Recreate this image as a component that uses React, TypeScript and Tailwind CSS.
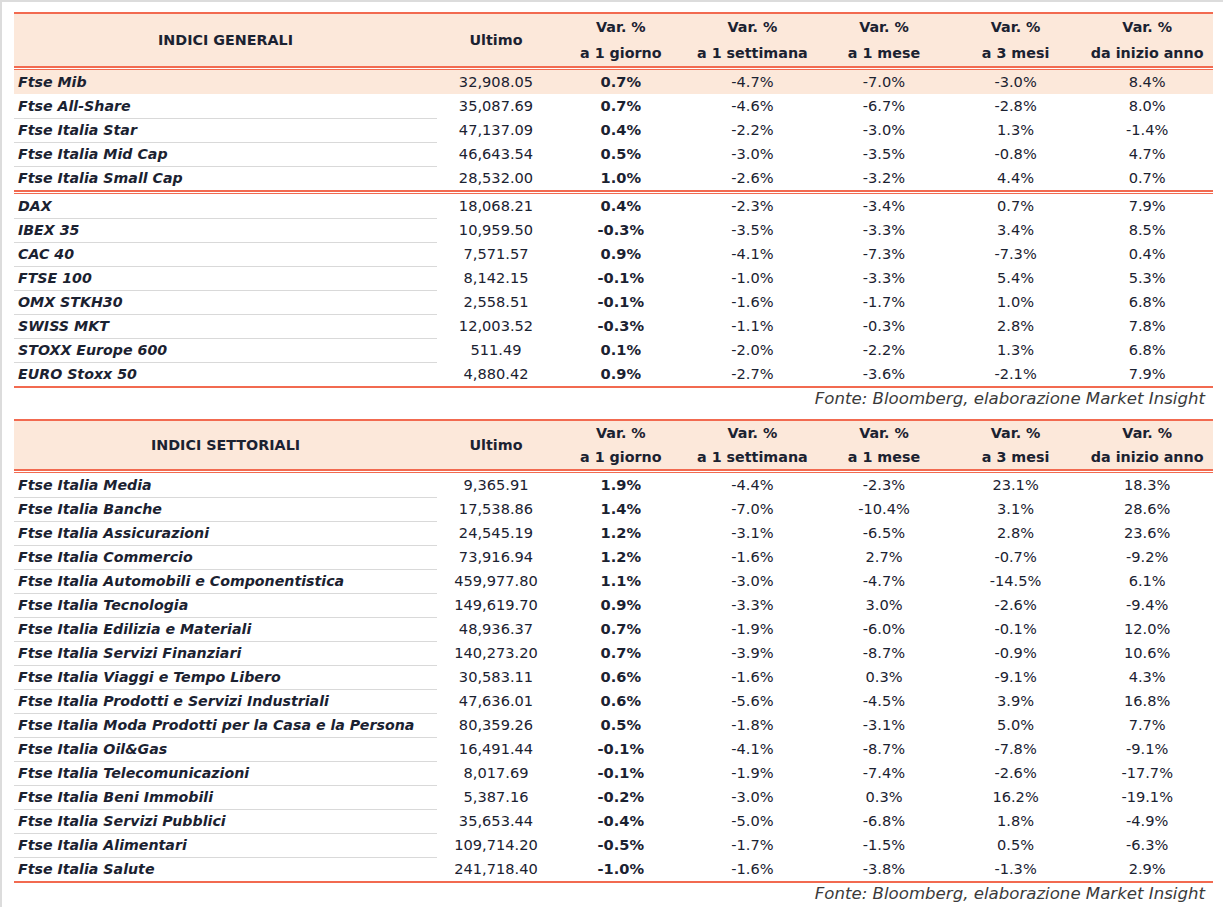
import React from "react";

type Row = [string, string, string, string, string, string, string];

const generaliA: Row[] = [
  ["Ftse Mib", "32,908.05", "0.7%", "-4.7%", "-7.0%", "-3.0%", "8.4%"],
  ["Ftse All-Share", "35,087.69", "0.7%", "-4.6%", "-6.7%", "-2.8%", "8.0%"],
  ["Ftse Italia Star", "47,137.09", "0.4%", "-2.2%", "-3.0%", "1.3%", "-1.4%"],
  ["Ftse Italia Mid Cap", "46,643.54", "0.5%", "-3.0%", "-3.5%", "-0.8%", "4.7%"],
  ["Ftse Italia Small Cap", "28,532.00", "1.0%", "-2.6%", "-3.2%", "4.4%", "0.7%"],
];

const generaliB: Row[] = [
  ["DAX", "18,068.21", "0.4%", "-2.3%", "-3.4%", "0.7%", "7.9%"],
  ["IBEX 35", "10,959.50", "-0.3%", "-3.5%", "-3.3%", "3.4%", "8.5%"],
  ["CAC 40", "7,571.57", "0.9%", "-4.1%", "-7.3%", "-7.3%", "0.4%"],
  ["FTSE 100", "8,142.15", "-0.1%", "-1.0%", "-3.3%", "5.4%", "5.3%"],
  ["OMX STKH30", "2,558.51", "-0.1%", "-1.6%", "-1.7%", "1.0%", "6.8%"],
  ["SWISS MKT", "12,003.52", "-0.3%", "-1.1%", "-0.3%", "2.8%", "7.8%"],
  ["STOXX Europe 600", "511.49", "0.1%", "-2.0%", "-2.2%", "1.3%", "6.8%"],
  ["EURO Stoxx 50", "4,880.42", "0.9%", "-2.7%", "-3.6%", "-2.1%", "7.9%"],
];

const settoriali: Row[] = [
  ["Ftse Italia Media", "9,365.91", "1.9%", "-4.4%", "-2.3%", "23.1%", "18.3%"],
  ["Ftse Italia Banche", "17,538.86", "1.4%", "-7.0%", "-10.4%", "3.1%", "28.6%"],
  ["Ftse Italia Assicurazioni", "24,545.19", "1.2%", "-3.1%", "-6.5%", "2.8%", "23.6%"],
  ["Ftse Italia Commercio", "73,916.94", "1.2%", "-1.6%", "2.7%", "-0.7%", "-9.2%"],
  ["Ftse Italia Automobili e Componentistica", "459,977.80", "1.1%", "-3.0%", "-4.7%", "-14.5%", "6.1%"],
  ["Ftse Italia Tecnologia", "149,619.70", "0.9%", "-3.3%", "3.0%", "-2.6%", "-9.4%"],
  ["Ftse Italia Edilizia e Materiali", "48,936.37", "0.7%", "-1.9%", "-6.0%", "-0.1%", "12.0%"],
  ["Ftse Italia Servizi Finanziari", "140,273.20", "0.7%", "-3.9%", "-8.7%", "-0.9%", "10.6%"],
  ["Ftse Italia Viaggi e Tempo Libero", "30,583.11", "0.6%", "-1.6%", "0.3%", "-9.1%", "4.3%"],
  ["Ftse Italia Prodotti e Servizi Industriali", "47,636.01", "0.6%", "-5.6%", "-4.5%", "3.9%", "16.8%"],
  ["Ftse Italia Moda Prodotti per la Casa e la Persona", "80,359.26", "0.5%", "-1.8%", "-3.1%", "5.0%", "7.7%"],
  ["Ftse Italia Oil&Gas", "16,491.44", "-0.1%", "-4.1%", "-8.7%", "-7.8%", "-9.1%"],
  ["Ftse Italia Telecomunicazioni", "8,017.69", "-0.1%", "-1.9%", "-7.4%", "-2.6%", "-17.7%"],
  ["Ftse Italia Beni Immobili", "5,387.16", "-0.2%", "-3.0%", "0.3%", "16.2%", "-19.1%"],
  ["Ftse Italia Servizi Pubblici", "35,653.44", "-0.4%", "-5.0%", "-6.8%", "1.8%", "-4.9%"],
  ["Ftse Italia Alimentari", "109,714.20", "-0.5%", "-1.7%", "-1.5%", "0.5%", "-6.3%"],
  ["Ftse Italia Salute", "241,718.40", "-1.0%", "-1.6%", "-3.8%", "-1.3%", "2.9%"],
];

const cols = "grid grid-cols-[423px_118px_repeat(5,minmax(0,1fr))]";

function Header({ title, tall }: { title: string; tall: boolean }) {
  const lh = tall ? "leading-[26px]" : "leading-[24px]";
  const subs = ["a 1 giorno", "a 1 settimana", "a 1 mese", "a 3 mesi", "da inizio anno"];
  return (
    <div className={`${cols} bg-[#fce8da] font-bold ${lh} text-[14.3px]`}>
      <div className="flex items-center justify-center">{title}</div>
      <div className="flex items-center justify-center">Ultimo</div>
      {subs.map((s) => (
        <div key={s} className="flex flex-col items-center">
          <span>Var. %</span>
          <span>{s}</span>
        </div>
      ))}
    </div>
  );
}

function DataRow({ r, hl, sep }: { r: Row; hl?: boolean; sep: boolean }) {
  return (
    <div className={`${cols} h-[24px] leading-[24px] text-[14.6px] ${hl ? "bg-[#fce8da]" : ""}`}>
      <div
        className={`pl-[4px] font-bold italic whitespace-nowrap text-[14.2px] ${sep ? "border-b border-[#d9d9d9]" : ""}`}
      >
        {r[0]}
      </div>
      <div className="text-center">{r[1]}</div>
      <div className="text-center font-bold">{r[2]}</div>
      <div className="text-center">{r[3]}</div>
      <div className="text-center">{r[4]}</div>
      <div className="text-center">{r[5]}</div>
      <div className="text-center">{r[6]}</div>
    </div>
  );
}

function DoubleLine() {
  return (
    <div className="flex flex-col">
      <div className="h-[2px] bg-[#f26a50]" />
      <div className="h-[1px]" />
      <div className="h-[1px] bg-[#f26a50]" />
    </div>
  );
}

function Fonte() {
  return (
    <div className="h-[22px] leading-[22px] text-right pr-[8px] italic text-[16.6px] text-[#3a3a3a] whitespace-nowrap">
      Fonte: Bloomberg, elaborazione Market Insight
    </div>
  );
}

export default function App() {
  return (
    <div
      className="w-[1223px] h-[907px] bg-white border-l-2 border-t-2 border-[#dcdcdc] text-[#1b2231] overflow-hidden"
      style={{ fontFamily: "'DejaVu Sans', sans-serif" }}
    >
      <div className="ml-[12px] w-[1199px] mt-[10px]">
        <div className="h-[2px] bg-[#f26a50]" />
        <Header title="INDICI GENERALI" tall />
        <DoubleLine />
        {generaliA.map((r, i) => (
          <DataRow key={r[0]} r={r} hl={i === 0} sep={i > 0 && i < generaliA.length - 1} />
        ))}
        <DoubleLine />
        {generaliB.map((r, i) => (
          <DataRow key={r[0]} r={r} sep={i < generaliB.length - 1} />
        ))}
        <div className="h-[2px] bg-[#f26a50]" />
        <Fonte />
        <div className="h-[9px]" />
        <div className="h-[2px] bg-[#f26a50]" />
        <Header title="INDICI SETTORIALI" tall={false} />
        <DoubleLine />
        {settoriali.map((r, i) => (
          <DataRow key={r[0]} r={r} sep={i < settoriali.length - 1} />
        ))}
        <div className="h-[2px] bg-[#f26a50]" />
        <Fonte />
      </div>
    </div>
  );
}
